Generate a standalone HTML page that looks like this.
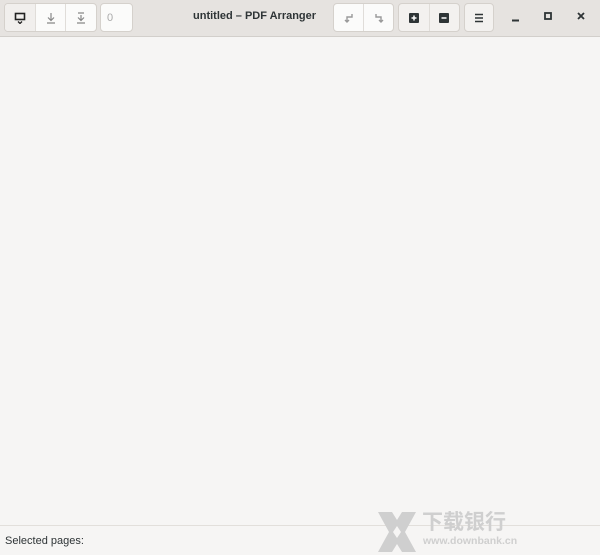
<!DOCTYPE html><html><head><style>
body{margin:0;width:600px;height:554px;background:#f6f5f4;font-family:"Liberation Sans",sans-serif;position:relative;overflow:hidden}
.hb{position:absolute;left:0;top:0;width:600px;height:36px;background:#e6e3e0;border-bottom:1px solid #d2cfcb}
.g{position:absolute;top:3px;height:27px;display:flex;border:1px solid #d5d1cc;border-radius:4px;background:#fbfbfa;overflow:hidden}
.g div{border-right:1px solid #e0ddd9;display:flex;align-items:center;justify-content:center;height:27px}
.g div:last-child{border-right:none}
.t{position:absolute;left:193px;top:10px;font-size:11px;font-weight:bold;color:#2e3436}
.st{position:absolute;left:0;top:525px;width:600px;border-top:1px solid #e2dfdb;height:29px}
.st span{position:absolute;left:5px;top:9px;font-size:11px;color:#2e3436}
</style></head><body>
<div class="hb">
<div class="g" style="left:4px;width:91px">
<div style="width:30px;background:#f1efed"><svg width="12" height="12"><rect x="1.5" y="1.5" width="9" height="6" fill="none" stroke="#222" stroke-width="1.6"/><path d="M4 9.5l2 2 2-2" stroke="#222" fill="none" stroke-width="1.3"/></svg></div>
<div style="width:30px"><svg width="12" height="12"><path d="M6 1v7M3 5.5l3 3 3-3M2 11h8" stroke="#888" fill="none" stroke-width="1.2"/></svg></div>
<div style="width:30px"><svg width="12" height="12"><path d="M6 3v5M3 5.5l3 3 3-3M2 11h8M3 1h6" stroke="#888" fill="none" stroke-width="1.2"/></svg></div>
</div>
<div class="g" style="left:100px;width:31px"><div style="width:31px;justify-content:flex-start;padding-left:6px;box-sizing:border-box;font-size:11px;color:#aaa">0</div></div>
<div class="t">untitled – PDF Arranger</div>
<div class="g" style="left:333px;width:59px">
<div style="width:29px"><svg width="12" height="12"><path d="M9 2v3H4v5M2 8l2 2 2-2" stroke="#999" fill="none" stroke-width="1.4"/></svg></div>
<div style="width:29px"><svg width="12" height="12"><path d="M3 2v3h5v5M6 8l2 2 2-2" stroke="#999" fill="none" stroke-width="1.4"/></svg></div>
</div>
<div class="g" style="left:398px;width:60px;background:#f3f1ef">
<div style="width:30px"><svg width="12" height="12"><rect x="1" y="1" width="10" height="10" rx="1" fill="#2e3436"/><path d="M6 3.5v5M3.5 6h5" stroke="#fff" stroke-width="1.5"/></svg></div>
<div style="width:30px"><svg width="12" height="12"><rect x="1" y="1" width="10" height="10" rx="1" fill="#2e3436"/><path d="M3.5 6h5" stroke="#fff" stroke-width="1.5"/></svg></div>
</div>
<div class="g" style="left:464px;width:28px;background:#f3f1ef"><div style="width:28px"><svg width="12" height="12"><path d="M2 2.5h8M2 6h8M2 9.5h8" stroke="#2e3436" stroke-width="1.5"/></svg></div></div>
<svg style="position:absolute;left:510px;top:10px" width="80" height="14"><path d="M2 10.5h7" stroke="#2e3436" stroke-width="2"/><rect x="35" y="3" width="6" height="6" fill="none" stroke="#2e3436" stroke-width="1.8"/><path d="M68 3l6 6M74 3l-6 6" stroke="#2e3436" stroke-width="1.8"/></svg>
</div>
<div class="st"><span>Selected pages:</span></div>
<svg style="position:absolute;left:378px;top:512px" width="38" height="40"><path d="M0 0h14l5 8 5-8h14l-11 20 11 20h-14l-5-8-5 8h-14l11-20z" fill="#cfcfcf"/><path d="M19 14l4 6-4 6-4-6z" fill="#f6f5f4"/></svg>
<div style="position:absolute;left:422px;top:508px;font-family:'Noto Sans CJK SC',sans-serif;font-size:21px;line-height:26px;color:#cfcfcf;font-weight:bold;white-space:nowrap">下载银行</div>
<div style="position:absolute;left:423px;top:535px;font-size:10.5px;color:#cfcfcf;font-weight:bold;white-space:nowrap">www.downbank.cn</div>
</body></html>
